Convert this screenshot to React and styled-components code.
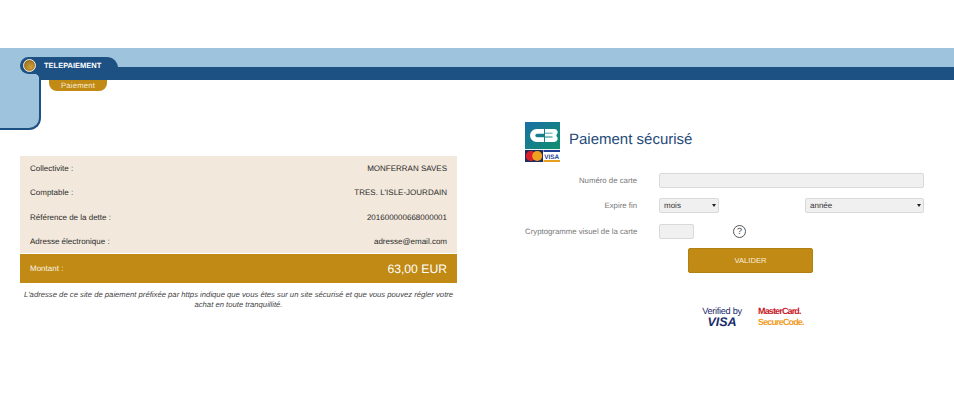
import React from 'react'
import styled, { createGlobalStyle } from 'styled-components'

const GOLD = '#c08a14'
const NAVY = '#1d5083'
const SKY = '#9dc3dd'

const Global = createGlobalStyle`
  html, body {
    margin: 0;
    background: #fff;
    font-family: "Liberation Sans", Arial, sans-serif;
    text-rendering: geometricPrecision;
  }
`

const Page = styled.div`
  width: 954px;
  height: 415px;
  padding-top: 48px;
  box-sizing: border-box;
  overflow: hidden;
`

const Header = styled.header`
  position: relative;
  display: flex;
  height: 82px;
`

const SidePanel = styled.div`
  display: flex;
  flex-direction: column;
  width: 41px;
`

const SideTop = styled.div`
  height: 26px;
  background: ${SKY};
`

const SideBody = styled.div`
  flex: 1;
  background: ${SKY};
  border-right: 2px solid ${NAVY};
  border-bottom: 2px solid ${NAVY};
  border-bottom-right-radius: 12px;
`

const Banner = styled.div`
  flex: 1;
`

const SkyBand = styled.div`
  height: 19px;
  background: ${SKY};
`

const NavyBand = styled.div`
  height: 13px;
  background: ${NAVY};
`

const Tab = styled.div`
  position: absolute;
  left: 20px;
  top: 9px;
  width: 98px;
  height: 17px;
  display: flex;
  align-items: center;
  gap: 8px;
  padding-left: 3px;
  box-sizing: border-box;
  background: ${NAVY};
  border-radius: 9px 12px 0 9px;
  color: #fff;
  font-size: 7.5px;
  font-weight: 700;

  &::after {
    content: '';
    position: absolute;
    left: 15px;
    top: 17px;
    width: 4px;
    height: 4px;
    background: radial-gradient(circle at 0 100%, transparent 3.6px, ${NAVY} 4.2px);
  }
`

const Dot = styled.span`
  width: 13px;
  height: 13px;
  flex: none;
  box-sizing: border-box;
  border: 1.5px solid #f4efe2;
  border-radius: 50%;
  background: radial-gradient(circle at 60% 65%, #d2a03a, #86631a 95%);
`

const Pill = styled.div`
  width: 58px;
  height: 11px;
  margin-left: 8px;
  background: ${GOLD};
  border-radius: 0 0 8px 8px;
  color: #f6ecd6;
  font-size: 7.7px;
  letter-spacing: 0.2px;
  line-height: 11px;
  text-align: center;
`

const Main = styled.main`
  display: flex;
  justify-content: space-between;
  padding: 0 30px 0 20px;
`

const Summary = styled.section`
  width: 437px;
  margin-top: 26px;
`

const Row = styled.div`
  display: flex;
  justify-content: space-between;
  align-items: center;
  height: 24.25px;
  padding: 1px 10px 0;
  box-sizing: border-box;
  background: #f3e8dc;
  color: #2a2a2a;
  font-size: 8px;
`

const TotalRow = styled.div`
  display: flex;
  justify-content: space-between;
  align-items: center;
  height: 29px;
  margin-top: 1px;
  padding: 0 10px;
  background: ${GOLD};
  color: #fbf3e2;
  font-size: 8px;
`

const Amount = styled.span`
  font-size: 12.2px;
  color: #fff;
`

const Note = styled.p`
  margin: 7px 0 0;
  color: #444;
  font-size: 7.7px;
  font-style: italic;
  line-height: 10px;
  text-align: center;
  white-space: nowrap;
`

const Payment = styled.section`
  width: 399px;
  margin-top: -8px;
`

const Title = styled.div`
  display: flex;
  align-items: center;
  gap: 8px;
  height: 40px;
  color: #1f4a78;
  font-size: 15px;
`

const TitleText = styled.span`
  margin-bottom: 5px;
`

const Field = styled.div`
  display: grid;
  grid-template-columns: 112px 1fr;
  column-gap: 22px;
  align-items: center;
  height: 15px;
  margin-top: ${p => p.$gap}px;
`

const Label = styled.label`
  color: #777;
  font-size: 7.8px;
  text-align: right;
  white-space: nowrap;
`

const Controls = styled.div`
  display: flex;
  justify-content: space-between;
  align-items: center;
`

const Input = styled.input`
  display: block;
  width: ${p => p.$width};
  height: 15px;
  padding: 0;
  box-sizing: border-box;
  background: #f0f0f0;
  border: 1px solid #d9d9d9;
  border-radius: 2px;
`

const Select = styled.div`
  display: flex;
  justify-content: space-between;
  align-items: center;
  width: ${p => p.$width}px;
  height: 15px;
  padding: 0 2px 0 4px;
  box-sizing: border-box;
  background: #f0f0f0;
  border: 1px solid #d9d9d9;
  border-radius: 2px;
  color: #333;
  font-size: 8px;
`

const Arrow = styled.span`
  width: 0;
  height: 0;
  border-left: 2px solid transparent;
  border-right: 2px solid transparent;
  border-top: 3px solid #222;
`

const CvvControls = styled.div`
  display: flex;
  align-items: center;
  gap: 39px;
`

const Help = styled.span`
  width: 13px;
  height: 13px;
  box-sizing: border-box;
  border: 1px solid #555;
  border-radius: 50%;
  color: #444;
  font-size: 9px;
  line-height: 11px;
  text-align: center;
`

const Submit = styled.button`
  display: block;
  width: 125px;
  height: 25px;
  margin: 9px 0 0 163px;
  padding: 0;
  background: ${GOLD};
  border: 1px solid #b08012;
  border-radius: 2px;
  color: #f8efdc;
  font-family: inherit;
  font-size: 7.6px;
`

const Badges = styled.div`
  display: flex;
  gap: 16px;
  margin: 33px 0 0 177px;
`

const VerifiedBadge = styled.div`
  width: 40px;
  color: #1b2a6b;
  text-align: center;
  font-size: 9.2px;
  letter-spacing: -0.3px;
  line-height: 11px;
  white-space: nowrap;
`

const VisaMark = styled.div`
  font-size: 12.5px;
  font-weight: 700;
  font-style: italic;
  letter-spacing: 0;
  line-height: 11px;
`

const SecureBadge = styled.div`
  width: 45px;
  font-size: 9px;
  font-weight: 700;
  letter-spacing: -0.85px;
  line-height: 11px;
  color: #c8202a;
  white-space: nowrap;
`

const SecureCode = styled.div`
  color: #f19a1c;
`

const CbLogo = () => (
  <svg width="36" height="40" viewBox="0 0 36 40" style={{ flex: 'none' }}>
    <defs>
      <linearGradient id="cb" x1="0" y1="0" x2="1" y2="1">
        <stop offset="0" stopColor="#1c6fa6" />
        <stop offset="1" stopColor="#0f8f6c" />
      </linearGradient>
    </defs>
    <rect width="35" height="27" fill="url(#cb)" />
    <path d="M19 7H11.5a6.5 6.5 0 0 0 0 13H19v-4.8h-7a1.7 1.7 0 0 1 0-3.4h7z" fill="#fff" />
    <path d="M20 7h9.5a3.2 3.2 0 0 1 2 5.7v1.6a3.2 3.2 0 0 1-2 5.7H20v-4.6h7.5v-.9H20v-2.9h7.5v-.9H20z" fill="#fff" />
    <rect y="27" width="35" height="13" fill="#f2f2f4" />
    <rect x="0" y="28" width="18" height="12" fill="#222a5c" />
    <circle cx="5.8" cy="34" r="5" fill="#d8202c" />
    <circle cx="12.2" cy="34" r="5" fill="#f0a020" />
    <rect x="18.5" y="28" width="16.5" height="12" fill="#fff" />
    <rect x="18.5" y="28" width="16.5" height="2" fill="#1c3f94" />
    <rect x="18.5" y="38" width="16.5" height="2" fill="#e8a020" />
    <text x="26.7" y="36.8" fontSize="6.4" fontWeight="700" textAnchor="middle" fill="#1c3f94" fontFamily="Liberation Sans">VISA</text>
  </svg>
)

export default function App () {
  return (
    <Page>
      <Global />
      <Header>
        <SidePanel>
          <SideTop />
          <SideBody />
        </SidePanel>
        <Banner>
          <SkyBand />
          <NavyBand />
          <Pill>Paiement</Pill>
        </Banner>
        <Tab>
          <Dot />
          TELEPAIEMENT
        </Tab>
      </Header>
      <Main>
        <Summary>
          <Row><span>Collectivite :</span><span>MONFERRAN SAVES</span></Row>
          <Row><span>Comptable :</span><span>TRES. L'ISLE-JOURDAIN</span></Row>
          <Row><span>Référence de la dette :</span><span>201600000668000001</span></Row>
          <Row><span>Adresse électronique :</span><span>adresse@email.com</span></Row>
          <TotalRow><span>Montant :</span><Amount>63,00 EUR</Amount></TotalRow>
          <Note>
            L'adresse de ce site de paiement préfixée par https indique que vous êtes sur un site sécurisé et que vous pouvez régler votre<br />achat en toute tranquillité.
          </Note>
        </Summary>
        <Payment>
          <Title><CbLogo /><TitleText>Paiement sécurisé</TitleText></Title>
          <Field $gap={11}>
            <Label>Numéro de carte</Label>
            <Input $width="100%" />
          </Field>
          <Field $gap={10}>
            <Label>Expire fin</Label>
            <Controls>
              <Select $width={60}>mois<Arrow /></Select>
              <Select $width={119}>année<Arrow /></Select>
            </Controls>
          </Field>
          <Field $gap={11}>
            <Label>Cryptogramme visuel de la carte</Label>
            <CvvControls>
              <Input $width="35px" />
              <Help>?</Help>
            </CvvControls>
          </Field>
          <Submit>VALIDER</Submit>
          <Badges>
            <VerifiedBadge>Verified by<VisaMark>VISA</VisaMark></VerifiedBadge>
            <SecureBadge>MasterCard.<SecureCode>SecureCode.</SecureCode></SecureBadge>
          </Badges>
        </Payment>
      </Main>
    </Page>
  )
}
